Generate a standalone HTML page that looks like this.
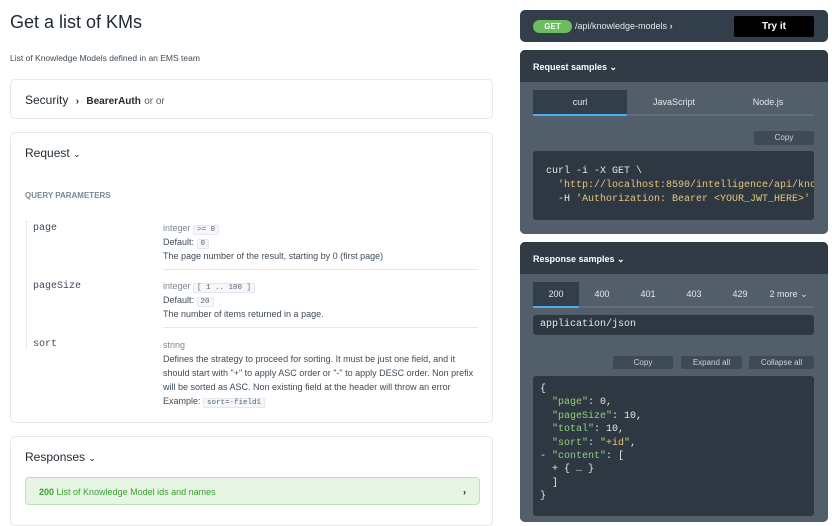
<!DOCTYPE html>
<html><head><style>
*{box-sizing:border-box;margin:0;padding:0}
body{width:832px;height:511px;overflow:hidden;background:#fff;font-family:"Liberation Sans",sans-serif;color:#1f2933;position:relative}
.a{position:absolute}
.box{position:absolute;left:10px;width:483px;border:1px solid #e4e7eb;border-radius:5px;background:#fff}
.mono{font-family:"Liberation Mono",monospace}
.tag{display:inline;border:1px solid #e4e7eb;background:#f5f7fa;border-radius:2px;font-family:"Liberation Mono",monospace;font-size:7.5px;line-height:10px;padding:0 3px;color:#52606d}
.t9{font-size:9px;color:#3e4c59}
.g{color:#7b8794}
.dark{position:absolute;left:520px;width:308px;background:#323e49;border-radius:5px;overflow:hidden}
.hdr{height:32px;background:#2f3a45;color:#fff;font-size:9px;font-weight:bold;padding:12px 13px}
.body{background:#525e6a;position:absolute;left:0;right:0;bottom:0}
.tab{position:absolute;top:8px;height:26px;color:#e4e7eb;font-size:9px;text-align:center;line-height:24px}
.btn{position:absolute;background:#3e4a56;color:#cbd2d9;font-size:8px;text-align:center;border-radius:2px}
.code{position:absolute;background:#2d3843;border-radius:3px;font-family:"Liberation Mono",monospace;font-size:10px;color:#e4e7eb;white-space:pre;overflow:hidden}
</style></head><body>
<div class="a" style="left:10px;top:12px;font-size:18px;color:#1f2933">Get a list of KMs</div>
<div class="a t9" style="left:10px;top:53px;font-size:8.5px">List of Knowledge Models defined in an EMS team</div>

<div class="box" style="top:79px;height:40px"><div class="a" style="left:14px;top:13px;font-size:12px">Security <span style="font-size:10px;font-weight:bold;margin:0 4px">›</span> <b style="font-size:10px">BearerAuth</b> <span style="font-size:10px;color:#52606d">or or</span></div></div>

<div class="box" style="top:132px;height:291px">
<div class="a" style="left:14px;top:13px;font-size:12px">Request <span style="font-size:9px">⌄</span></div>
<div class="a" style="left:14px;top:58px;font-size:8px;font-weight:bold;color:#7b8794">QUERY PARAMETERS</div>
<div class="a" style="left:15px;top:88px;height:128px;border-left:1px dotted #cbd2d9"></div>
<div class="a mono" style="left:22px;top:90px;font-size:10px;color:#3e4c59">page</div>
<div class="a t9" style="left:152px;top:88px;line-height:14px;white-space:nowrap"><span class="g">integer</span> <span class="tag">&gt;= 0</span><br>Default: <span class="tag">0</span><br>The page number of the result, starting by 0 (first page)</div>
<div class="a" style="left:152px;top:136px;width:315px;border-top:1px solid #e4e7eb"></div>
<div class="a mono" style="left:22px;top:148px;font-size:10px;color:#3e4c59">pageSize</div>
<div class="a t9" style="left:152px;top:146px;line-height:14px;white-space:nowrap"><span class="g">integer</span> <span class="tag">[ 1 .. 100 ]</span><br>Default: <span class="tag">20</span><br>The number of items returned in a page.</div>
<div class="a" style="left:152px;top:194px;width:315px;border-top:1px solid #e4e7eb"></div>
<div class="a mono" style="left:22px;top:206px;font-size:10px;color:#3e4c59">sort</div>
<div class="a t9" style="left:152px;top:205px;line-height:14px;width:315px"><span class="g">string</span><br>Defines the strategy to proceed for sorting. It must be just one field, and it should start with "+" to apply ASC order or "-" to apply DESC order. Non prefix will be sorted as ASC. Non existing field at the header will throw an error<br>Example: <span class="tag">sort=-field1</span></div>
</div>

<div class="box" style="top:436px;height:90px">
<div class="a" style="left:14px;top:13px;font-size:12px">Responses <span style="font-size:9px">⌄</span></div>
<div class="a" style="left:14px;top:40px;width:455px;height:28px;background:#e6f5e3;border:1px solid #b9e3b0;border-radius:4px;color:#38a131;font-size:9px;padding:9px 13px"><b>200</b> List of Knowledge Model ids and names<span style="position:absolute;right:13px;color:#1f2933;font-weight:bold">›</span></div>
</div>

<div class="dark" style="top:10px;height:32px">
<div class="a" style="left:13px;top:10px;width:39px;height:13px;background:#6cbd5e;border-radius:7px;color:#fff;font-size:8px;font-weight:bold;text-align:center;line-height:13px">GET</div>
<div class="a" style="left:55px;top:11px;font-size:9px;color:#e4e7eb">/api/knowledge-models <b>›</b></div>
<div class="a" style="left:214px;top:6px;width:80px;height:21px;background:#000;border-radius:2px;color:#fff;font-size:10px;font-weight:bold;text-align:center;line-height:21px">Try it</div>
</div>

<div class="dark" style="top:50px;height:184px">
<div class="hdr">Request samples ⌄</div>
<div class="body" style="top:32px">
<div class="a" style="left:13px;top:32px;width:281px;height:2px;background:#616d79"></div>
<div class="tab" style="left:13px;width:94px;background:#323e49;border-bottom:2px solid #4db0ee">curl</div>
<div class="tab" style="left:107px;width:94px">JavaScript</div>
<div class="tab" style="left:201px;width:94px">Node.js</div>
<div class="btn" style="left:234px;top:49px;width:60px;height:14px;line-height:14px">Copy</div>
<div class="code" style="left:13px;top:69px;width:281px;height:69px;padding:14px 13px;line-height:14px">curl -i -X GET \
  <span style="color:#e8c57a">'http://localhost:8590/intelligence/api/knowledge-models'</span> \
  -H <span style="color:#e8c57a">'Authorization: Bearer &lt;YOUR_JWT_HERE&gt;'</span></div>
</div></div>

<div class="dark" style="top:242px;height:280px">
<div class="hdr">Response samples ⌄</div>
<div class="body" style="top:32px">
<div class="a" style="left:13px;top:32px;width:281px;height:2px;background:#616d79"></div>
<div class="tab" style="left:13px;width:46px;background:#323e49;border-bottom:2px solid #4db0ee">200</div>
<div class="tab" style="left:59px;width:46px">400</div>
<div class="tab" style="left:105px;width:46px">401</div>
<div class="tab" style="left:151px;width:46px">403</div>
<div class="tab" style="left:197px;width:46px">429</div>
<div class="tab" style="left:243px;width:51px">2 more ⌄</div>
<div class="code" style="left:13px;top:41px;width:281px;height:20px;padding:4px 7px;font-size:10px">application/json</div>
<div class="btn" style="left:93px;top:82px;width:60px;height:13px;line-height:13px">Copy</div>
<div class="btn" style="left:161px;top:82px;width:61px;height:13px;line-height:13px">Expand all</div>
<div class="btn" style="left:229px;top:82px;width:65px;height:13px;line-height:13px">Collapse all</div>
<div class="code" style="left:13px;top:102px;width:281px;height:140px;padding:7px 7px;line-height:13.4px;font-size:10px">{
  <span style="color:#8ed07e">"page"</span>: 0,
  <span style="color:#8ed07e">"pageSize"</span>: 10,
  <span style="color:#8ed07e">"total"</span>: 10,
  <span style="color:#8ed07e">"sort"</span>: <span style="color:#e8c57a">"+id"</span>,
- <span style="color:#8ed07e">"content"</span>: [
  + { … }
  ]
}</div>
</div></div>
</body></html>
